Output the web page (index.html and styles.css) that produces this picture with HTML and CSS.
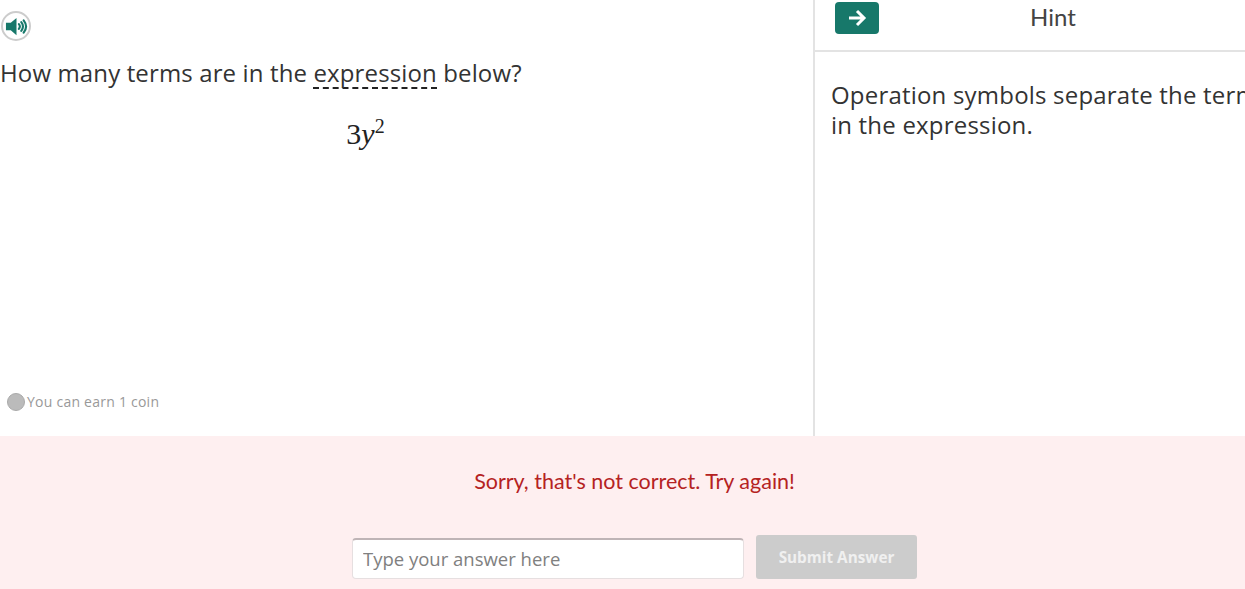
FILE: index.html
```html
<!DOCTYPE html>
<html lang="en">
<head>
    <meta charset="UTF-8">
    <title>Hint</title>
    <link rel="stylesheet" href="styles.css">
</head>
<body>
    <div class="page">
        <div class="workspace">
            <div class="question">
                <button class="audio-btn" aria-label="Read aloud">
                    <svg width="24" height="24" viewBox="0 0 24 24">
                        <path d="M1 8h5l6-5v18l-6-5H1z" fill="#17786a"/>
                        <path d="M14.500 9.500q2 2.500 0 5M17 7.500q3.500 4.500 0 9M19.500 5.500q5 6.500 0 13" fill="none" stroke="#17786a" stroke-width="2.200" stroke-linecap="round"/>
                    </svg>
                </button>
                <p class="prompt">How many terms are in the <span class="glossary">expression</span> below?</p>
                <div class="math">3<i>y</i><sup>2</sup></div>
                <div class="coins">
                    <span class="coin"></span>
                    <span>You can earn 1 coin</span>
                </div>
            </div>
            <div class="hint">
                <div class="hint-head">
                    <button class="next-btn" aria-label="Next">
                        <svg width="22" height="22" viewBox="0 0 22 22">
                            <path d="M3 11h15M11 4l7 7-7 7" fill="none" stroke="#fff" stroke-width="3"/>
                        </svg>
                    </button>
                    <div class="hint-title">Hint</div>
                </div>
                <p class="hint-text">Operation symbols separate the terms in the expression.</p>
            </div>
        </div>
        <div class="feedback">
            <p class="feedback-msg">Sorry, that's not correct. Try again!</p>
            <form class="answer-row">
                <input class="answer-input" type="text" placeholder="Type your answer here">
                <button class="submit-btn" type="button" disabled>Submit Answer</button>
            </form>
        </div>
    </div>
</body>
</html>
```

FILE: styles.css
```css
* {
    box-sizing: border-box;
}

html, body {
    margin: 0;
    height: 100%;
    overflow: hidden;
    background: #fff;
}

.page {
    height: 589px;
    font-family: "Open Sans", sans-serif;
    color: #333;
}

.workspace {
    display: flex;
    height: 436px;
}

.question {
    display: flex;
    flex-direction: column;
    width: 815px;
    flex-shrink: 0;
    border-right: 2px solid #e3e3e3;
}

.audio-btn {
    display: flex;
    align-items: center;
    justify-content: center;
    width: 30px;
    height: 30px;
    margin: 11px 0 0 1px;
    padding: 0;
    background: #fff;
    border: 2px solid #ccc;
    border-radius: 50%;
}

.audio-btn svg {
    width: 23px;
    height: 23px;
}

.prompt {
    margin: 16px 0 0;
    font-size: 24px;
    line-height: 32px;
    letter-spacing: 0.13px;
}

.glossary {
    display: inline-block;
    line-height: 28px;
    border-bottom: 2px dashed #222;
}

.math {
    margin-top: 27px;
    padding-right: 82px;
    text-align: center;
    font-family: "Liberation Serif", serif;
    font-size: 30px;
    line-height: 36px;
    color: #222;
}

.math sup {
    font-size: 20px;
    line-height: 0;
}

.coins {
    display: flex;
    align-items: center;
    gap: 2px;
    margin-top: auto;
    margin-bottom: 24px;
    padding-left: 7px;
    font-size: 14px;
    line-height: 20px;
    letter-spacing: 0.24px;
    color: #999;
}

.coin {
    width: 18px;
    height: 18px;
    background: #bbb;
    border: 1px solid #aaa;
    border-radius: 50%;
}

.hint {
    flex: 1;
    min-width: 0;
    overflow: hidden;
}

.hint-head {
    display: flex;
    align-items: flex-start;
    height: 52px;
    padding: 2px 0 0 20px;
    border-bottom: 2px solid #e3e3e3;
}

.next-btn {
    display: flex;
    align-items: center;
    justify-content: center;
    width: 44px;
    height: 32px;
    padding: 0;
    background: #17786a;
    border: none;
    border-radius: 4px;
}

.hint-title {
    margin: -1px 0 0 151px;
    font-family: Lato, sans-serif;
    font-size: 24px;
    line-height: 32px;
    color: #444;
}

.hint-text {
    width: 440px;
    margin: 28px 0 0 16px;
    font-size: 24px;
    line-height: 30px;
    letter-spacing: 0.2px;
}

.feedback {
    height: 153px;
    padding: 30px 0 0 24px;
    background: #feeff0;
    text-align: center;
}

.feedback-msg {
    margin: 0;
    font-family: Lato, sans-serif;
    font-size: 21.5px;
    line-height: 30px;
    color: #b52222;
}

.answer-row {
    display: flex;
    justify-content: center;
    align-items: flex-start;
    gap: 12px;
    margin-top: 39px;
}

.answer-input {
    width: 392px;
    height: 41px;
    margin-top: 3px;
    padding: 0 10px 2px;
    font-family: "Open Sans", sans-serif;
    font-size: 18.5px;
    color: #333;
    background: #fff;
    border: 1px solid #e6dfe0;
    border-top: 2px solid #bfb4b6;
    border-radius: 4px;
}

.answer-input::placeholder {
    color: #808080;
    opacity: 1;
}

.submit-btn {
    width: 161px;
    height: 44px;
    font-family: "Open Sans", sans-serif;
    font-size: 15.300px;
    font-weight: 700;
    color: #f0f0f0;
    background: #ccc;
    border: none;
    border-radius: 3px;
}
```
